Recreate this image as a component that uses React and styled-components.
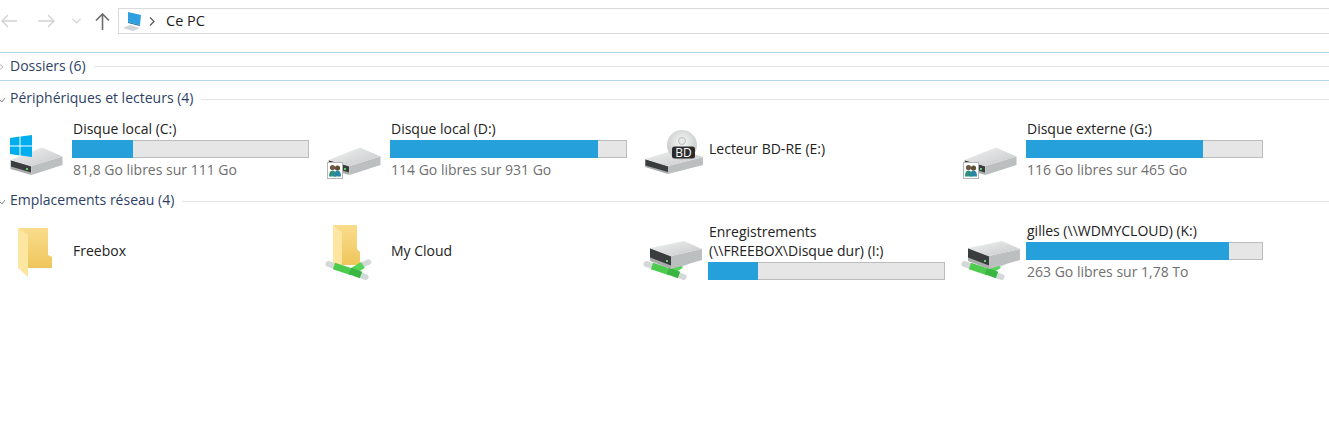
import React from "react";
import styled, { createGlobalStyle } from "styled-components";

const GlobalStyle = createGlobalStyle`
  html, body {
    margin: 0;
    background: #fff;
  }
  body {
    font-family: "Open Sans", "Noto Sans", sans-serif;
    font-size: 14px;
  }
`;

const DriveBody = () => (
  <>
    <polygon points="4.5,43 25.5,49 25.5,58 4.5,52" fill="#a9abac" />
    <polygon points="5,43.5 25,49.5 25,55.5 5,49.5" fill="#3a3d3e" />
    <polygon points="25.5,49 56.5,39.5 56.5,48 25.5,58" fill="#bcbfc0" />
    <polygon points="4.5,43 36,30.5 56.5,39.5 25.5,49" fill="url(#driveTop)" />
    <rect x="20" y="51" width="2" height="2" fill="#5fd16a" />
  </>
);

const NetDriveBody = () => (
  <>
    <polygon points="8,29 29,37 29,50 8,42" fill="#a9abac" />
    <polygon points="8,29.5 29,37.5 29,46.5 8,38.5" fill="#3a3d3e" />
    <polygon points="29,37 60,30 60,41 29,50" fill="#bcbfc0" />
    <polygon points="8,29 42,22 60,30 29,37" fill="url(#driveTop)" />
    <rect x="24" y="41" width="2" height="2" fill="#5fd16a" />
  </>
);

const Defs = () => (
  <svg width="0" height="0" style={{ position: "absolute" }} aria-hidden="true">
    <defs>
      <linearGradient id="driveTop" x1="0" y1="0" x2="1" y2="1">
        <stop offset="0" stopColor="#f1f2f2" />
        <stop offset="1" stopColor="#c6c8c9" />
      </linearGradient>
      <linearGradient id="folderBack" x1="0" y1="0" x2="0" y2="1">
        <stop offset="0" stopColor="#f9dc8c" />
        <stop offset="1" stopColor="#efc65c" />
      </linearGradient>
      <radialGradient id="disc" cx="0.5" cy="0.4" r="0.6">
        <stop offset="0" stopColor="#f8f8f8" />
        <stop offset="1" stopColor="#c5c7c7" />
      </radialGradient>
    </defs>
  </svg>
);

const Tubes = () => (
  <g fill="none" strokeLinecap="round">
    <path d="M4.5 45 L10 47" stroke="#d3d9d6" strokeWidth="6" />
    <path d="M38 46 L44.5 43" stroke="#d3d9d6" strokeWidth="5.5" />
    <path d="M36 56 L41.5 58" stroke="#d3d9d6" strokeWidth="6" />
    <path d="M10 47 L28 53" stroke="#4ccb4e" strokeWidth="7" strokeLinecap="butt" />
    <path d="M27 53 L39 46" stroke="#55d457" strokeWidth="7" strokeLinecap="butt" />
    <path d="M26 52 L37 56" stroke="#3bb542" strokeWidth="7" strokeLinecap="butt" />
  </g>
);

const UserBadge = () => (
  <g>
    <rect x="3.5" y="45.5" width="15" height="16" fill="#fff" stroke="#b5b5b5" />
    <circle cx="8.5" cy="50.5" r="2.6" fill="#6e5a42" />
    <circle cx="13.5" cy="51" r="2.6" fill="#5c5038" />
    <path d="M5 59.5 q0-6 3.5-6 q3.5 0 3.5 6 z" fill="#2f8f7a" />
    <path d="M10 59.5 q0-6 3.5-6 q3.5 0 3.5 6 z" fill="#2b86a6" />
  </g>
);

const Icon = ({ type }) => (
  <svg width="64" height="64" viewBox="0 0 64 64">
    {type === "system" && (
      <>
        <DriveBody />
        <polygon points="4,21 13.5,19.6 13.5,28.5 4,28.5" fill="#00adef" />
        <polygon points="14.5,19.4 26,18 26,28.5 14.5,28.5" fill="#00adef" />
        <polygon points="4,29.5 13.5,29.5 13.5,38.5 4,37" fill="#00adef" />
        <polygon points="14.5,29.5 26,29.5 26,40 14.5,38.6" fill="#00adef" />
      </>
    )}
    {type === "user" && (
      <>
        <DriveBody />
        <UserBadge />
      </>
    )}
    {type === "disc" && (
      <>
        <polygon points="3,42 26,49 26,57 3,50" fill="#a9abac" />
        <polygon points="3.5,42.5 26,49.5 26,55 3.5,48.5" fill="#3a3d3e" />
        <polygon points="26,49 61,40 61,48 26,57" fill="#bcbfc0" />
        <polygon points="3,42 36,32 61,40 26,49" fill="url(#driveTop)" />
        <circle cx="40" cy="28" r="15" fill="url(#disc)" />
        <circle cx="40" cy="24" r="3.5" fill="#e6e7e7" stroke="#bdbfbf" />
        <rect x="30" y="29.5" width="23" height="12" rx="2.5" fill="#2b2b2b" />
        <BadgeText x="41.5" y="40" textAnchor="middle">BD</BadgeText>
      </>
    )}
    {type === "folder" && (
      <>
        <polygon points="12,9 42,9 42,36 46,38 46,49 22,49" fill="url(#folderBack)" />
        <polygon points="12,9 22,16 22,58 12,49" fill="#fde6a2" />
      </>
    )}
    {type === "netFolder" && (
      <>
        <polygon points="9,6 33,6 33,30 36,33 36,46 9,46" fill="url(#folderBack)" />
        <polygon points="9,6 18,13 18,50 9,44" fill="#fde6a2" />
        <Tubes />
      </>
    )}
    {type === "netDrive" && (
      <>
        <Tubes />
        <NetDriveBody />
      </>
    )}
  </svg>
);

const BadgeText = styled.text`
  fill: #fff;
  font-family: "Open Sans", sans-serif;
  font-size: 12px;
`;

const Toolbar = styled.div`
  display: flex;
  align-items: flex-start;
  box-sizing: border-box;
  height: 53px;
  padding-top: 8px;
  border-bottom: 1px solid #b4d5e8;
`;

const NavButtons = styled.div`
  display: flex;
  align-items: center;
  width: 118px;
  height: 26px;
`;

const NavIcon = styled.svg`
  flex: none;
  margin-left: ${(props) => props.$left}px;
`;

const AddressBar = styled.div`
  flex: 1;
  display: flex;
  align-items: center;
  box-sizing: border-box;
  height: 26px;
  padding-left: 3px;
  border: 1px solid #d9d9d9;
  border-right: none;
  font-size: 14.5px;
  color: #1c1c1c;
`;

const AddressText = styled.span`
  margin-bottom: 2px;
`;

const PathChevron = styled.svg`
  margin: 0 11px 0 7px;
`;

const Group = styled.section`
  display: ${(props) => (props.$collapsed ? "flex" : "block")};
  align-items: center;
  box-sizing: border-box;
  height: ${(props) => (props.$collapsed ? "28px" : "auto")};
  border-bottom: ${(props) => (props.$collapsed ? "1px solid #b4d5e8" : "none")};
`;

const Heading = styled.div`
  display: flex;
  flex: 1;
  align-items: center;
  gap: 8px;
  height: 20px;
  margin-top: ${(props) => props.$top || 0}px;
  margin-bottom: ${(props) => props.$bottom || 0}px;
  font-size: 14px;
  color: #2e3f66;

  &::after {
    content: "";
    flex: 1;
    height: 1px;
    background: #e4e4e4;
  }
`;

const Caret = styled.svg`
  flex: none;
  margin-right: -8px;
`;

const HeadingText = styled.span`
  margin-bottom: 3px;
  white-space: nowrap;
`;

const Tiles = styled.div`
  display: grid;
  grid-template-columns: repeat(4, 318px);
  margin-bottom: ${(props) => props.$bottom || 0}px;
`;

const Tile = styled.div`
  display: flex;
  align-items: center;
  gap: 2px;
  height: 62px;
  padding-left: 6px;
`;

const TileText = styled.div`
  width: 237px;
  color: #222;
  font-size: 14px;
  line-height: 19px;
`;

const Label = styled.div`
  margin: -1px 0 1px;
  padding-left: 1px;
  white-space: nowrap;
`;

const Sub = styled.div`
  padding-left: 1px;
  margin-top: 2px;
  color: #6f6f6f;
`;

const Bar = styled.div`
  box-sizing: border-box;
  height: 18px;
  margin-top: 2px;
  border: 1px solid #bcbcbc;
  background: #e6e6e6;
`;

const BarFill = styled.div`
  height: 100%;
  margin: -1px 0 0 -1px;
  padding: 0 1px 2px 0;
  background: #26a0da;
`;

const devices = [
  { icon: "system", label: "Disque local (C:)", used: 25.7, sub: "81,8 Go libres sur 111 Go" },
  { icon: "user", label: "Disque local (D:)", used: 88, sub: "114 Go libres sur 931 Go" },
  { icon: "disc", label: "Lecteur BD-RE (E:)" },
  { icon: "user", label: "Disque externe (G:)", used: 75, sub: "116 Go libres sur 465 Go" },
];

const network = [
  { icon: "folder", label: "Freebox" },
  { icon: "netFolder", label: "My Cloud" },
  { icon: "netDrive", label: "Enregistrements", label2: "(\\\\FREEBOX\\Disque dur) (I:)", used: 21 },
  { icon: "netDrive", label: "gilles (\\\\WDMYCLOUD) (K:)", used: 86, sub: "263 Go libres sur 1,78 To" },
];

const DriveTile = ({ icon, label, label2, used, sub }) => (
  <Tile>
    <Icon type={icon} />
    <TileText>
      <Label>{label}</Label>
      {label2 && <Label>{label2}</Label>}
      {used !== undefined && (
        <Bar>
          <BarFill style={{ width: `${used}%` }} />
        </Bar>
      )}
      {sub && <Sub>{sub}</Sub>}
    </TileText>
  </Tile>
);

const App = () => (
  <>
    <GlobalStyle />
    <Defs />
    <Toolbar>
      <NavButtons>
        <NavIcon $left={1} width="16" height="14" viewBox="0 0 16 14" fill="none" stroke="#d2d2d2" strokeWidth="1.4">
          <path d="M16 7H1M7 1 1 7l6 6" />
        </NavIcon>
        <NavIcon $left={21} width="17" height="14" viewBox="0 0 17 14" fill="none" stroke="#d2d2d2" strokeWidth="1.4">
          <path d="M0 7h16M10 1l6 6-6 6" />
        </NavIcon>
        <NavIcon $left={17} width="9" height="6" viewBox="0 0 9 6" fill="none" stroke="#d2d2d2" strokeWidth="1.2">
          <path d="M.5 1l4 4 4-4" />
        </NavIcon>
        <NavIcon $left={14} width="15" height="17" viewBox="0 0 15 17" fill="none" stroke="#6b6b6b" strokeWidth="1.6">
          <path d="M7.5 17V1.2M1 7.5l6.5-6.5L14 7.5" />
        </NavIcon>
      </NavButtons>
      <AddressBar>
        <svg width="20" height="20" viewBox="0 0 20 20">
          <polygon points="6,1 19,4 18,14 6,11" fill="#2f9fe0" />
          <polygon points="6,11 18,14 17.5,15 6,12" fill="#1f6fa8" />
          <polygon points="1,17 8,14 18,17 11,20" fill="#cfd4d8" />
        </svg>
        <PathChevron width="6" height="9" viewBox="0 0 6 9" fill="none" stroke="#555" strokeWidth="1.2">
          <path d="M1 .5l4 4-4 4" />
        </PathChevron>
        <AddressText>Ce PC</AddressText>
      </AddressBar>
    </Toolbar>
    <Group $collapsed>
      <Heading>
        <Caret width="10" height="8" viewBox="0 0 10 8" fill="none" stroke="#b5b5b5">
          <path d="M0 1.5l3 2.5-3 2.5" />
        </Caret>
        <HeadingText>Dossiers (6)</HeadingText>
      </Heading>
    </Group>
    <Group>
      <Heading $top={8} $bottom={9}>
        <Caret width="10" height="8" viewBox="0 0 10 8" fill="none" stroke="#8a8a8a">
          <path d="M0 5l2 2 3-4" />
        </Caret>
        <HeadingText>Périphériques et lecteurs (4)</HeadingText>
      </Heading>
      <Tiles $bottom={11}>
        {devices.map((item) => (
          <DriveTile key={item.label} {...item} />
        ))}
      </Tiles>
    </Group>
    <Group>
      <Heading $bottom={9}>
        <Caret width="10" height="8" viewBox="0 0 10 8" fill="none" stroke="#8a8a8a">
          <path d="M0 5l2 2 3-4" />
        </Caret>
        <HeadingText>Emplacements réseau (4)</HeadingText>
      </Heading>
      <Tiles>
        {network.map((item) => (
          <DriveTile key={item.label} {...item} />
        ))}
      </Tiles>
    </Group>
  </>
);

export default App;
